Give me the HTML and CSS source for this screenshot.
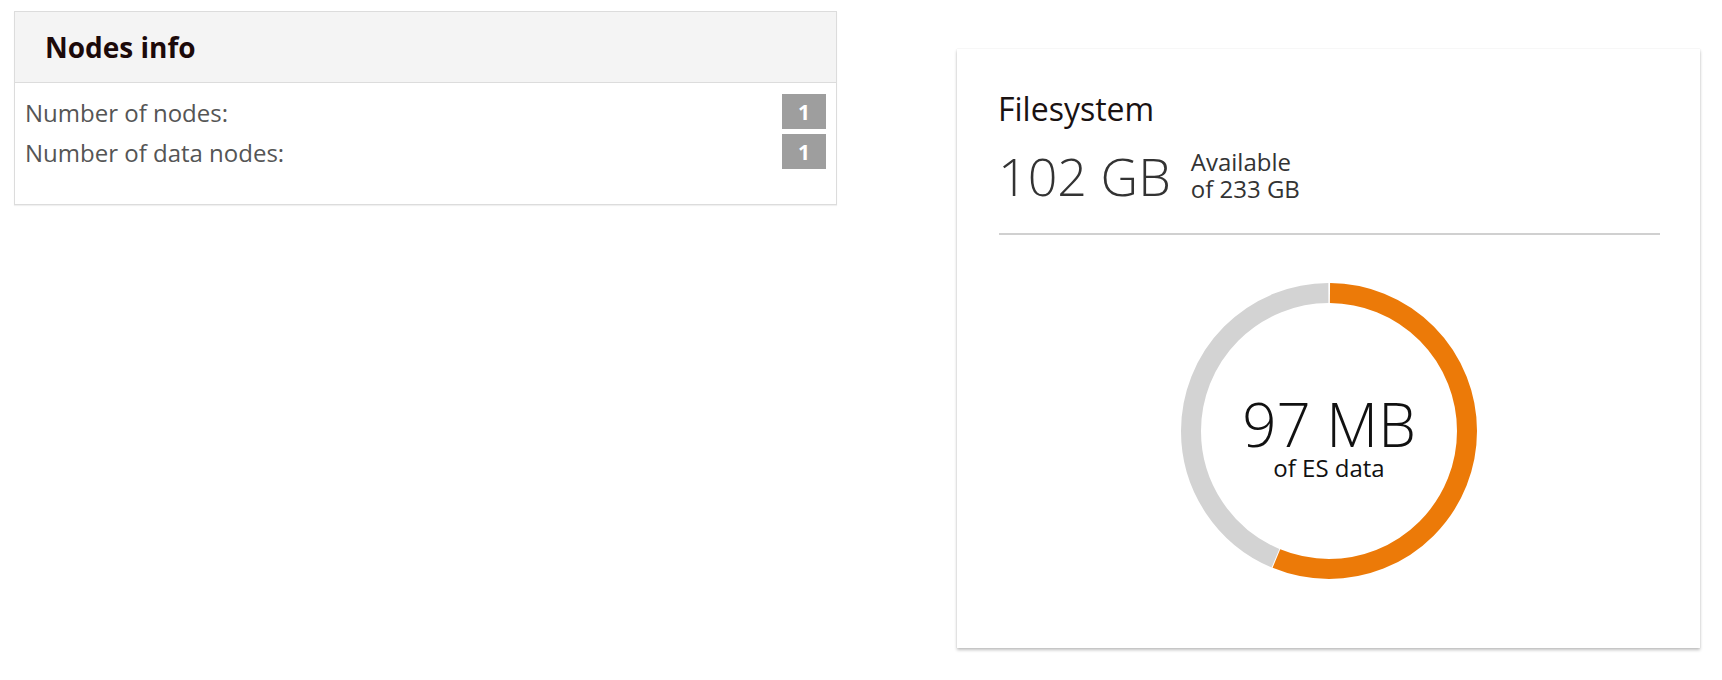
FILE: index.html
```html
<!DOCTYPE html>
<html lang="en">
<head>
<meta charset="utf-8">
<title>Cluster overview</title>
<link rel="stylesheet" href="styles.css">
</head>
<body>
<div class="page">
  <section class="nodes-panel">
    <header class="nodes-header"><h2>Nodes info</h2></header>
    <div class="nodes-body">
      <div class="nodes-row"><span class="label">Number of nodes:</span><span class="badge">1</span></div>
      <div class="nodes-row"><span class="label">Number of data nodes:</span><span class="badge">1</span></div>
    </div>
  </section>

  <section class="fs-card">
    <h3 class="fs-title">Filesystem</h3>
    <div class="fs-stats">
      <span class="fs-big">102 GB</span>
      <span class="fs-sub">Available<br>of 233 GB</span>
    </div>
    <div class="fs-sep"></div>
    <div class="donut">
      <svg class="donut-svg" width="300" height="300" viewBox="0 0 300 300">
        <circle cx="150" cy="150" r="138" fill="none" stroke="#d3d3d3" stroke-width="20"
          stroke-dasharray="377.8 1000" stroke-dashoffset="-488.3" transform="rotate(-90 150 150)"/>
        <circle cx="150" cy="150" r="138" fill="none" stroke="#ec7a08" stroke-width="20"
          stroke-dasharray="486.3 1000" stroke-dashoffset="-1" transform="rotate(-90 150 150)"/>
      </svg>
      <div class="donut-label">
        <span class="donut-big">97 MB</span>
        <span class="donut-small">of ES data</span>
      </div>
    </div>
  </section>
</div>
</body>
</html>
```

FILE: styles.css
```css
html, body {
  margin: 0;
  padding: 0;
  background: #ffffff;
}

body {
  font-family: "Open Sans", "Liberation Sans", sans-serif;
  color: #555;
  min-height: 680px;
}

.page {
  display: flex;
  align-items: flex-start;
  padding: 11px 0 0 14px;
}

/* Nodes info panel */
.nodes-panel {
  box-sizing: border-box;
  width: 823px;
  border: 1px solid #dcdcdc;
  box-shadow: 0 1px 1px rgba(0, 0, 0, 0.06);
  background: #fff;
}

.nodes-header {
  height: 70px;
  background: #f4f4f4;
  border-bottom: 1px solid #dcdcdc;
  display: flex;
  align-items: center;
  padding-left: 30px;
}

.nodes-header h2 {
  margin: 0;
  font-size: 28px;
  font-weight: 700;
  color: #1c0a0a;
  line-height: 40px;
}

.nodes-body {
  padding: 11px 10px 35px 10px;
  display: flex;
  flex-direction: column;
  gap: 5px;
}

.nodes-row {
  display: flex;
  justify-content: space-between;
  align-items: center;
  height: 35px;
}

.label {
  font-size: 24px;
  color: #555;
  line-height: 35px;
  padding-top: 2px;
}

.badge {
  width: 44px;
  height: 35px;
  background: #9e9e9e;
  color: #fff;
  font-weight: 700;
  font-size: 21px;
  display: flex;
  align-items: center;
  justify-content: center;
}

/* Filesystem card */
.fs-card {
  box-sizing: border-box;
  flex: none;
  width: 743px;
  height: 599px;
  margin: 38px 0 0 120px;
  padding: 40px 40px 0 41px;
  background: #fff;
  box-shadow: 0 2px 3px rgba(0, 0, 0, 0.25), 0 0 1px rgba(0, 0, 0, 0.12);
  display: flex;
  flex-direction: column;
}

.fs-title {
  margin: 0;
  font-size: 32px;
  font-weight: 400;
  line-height: 40px;
  color: #1a1212;
}

.fs-stats {
  display: flex;
  align-items: flex-end;
  gap: 20px;
  margin-top: 20px;
}

.fs-big {
  font-size: 52px;
  font-weight: 300;
  line-height: 52px;
  color: #333;
}

.fs-sub {
  font-size: 24px;
  line-height: 26.6px;
  color: #333;
}

.fs-sep {
  height: 2px;
  background: #d0d0d0;
  margin-top: 31px;
  margin-left: 1px;
}

.donut {
  position: relative;
  align-self: center;
  width: 300px;
  height: 300px;
  margin-top: 46px;
}

.donut-svg {
  display: block;
}

.donut-label {
  position: absolute;
  inset: 0;
  display: flex;
  flex-direction: column;
  align-items: center;
  justify-content: center;
  padding-top: 13px;
  box-sizing: border-box;
  color: #111;
}

.donut-big {
  font-size: 60px;
  font-weight: 300;
  line-height: 60px;
}

.donut-small {
  font-size: 24px;
  line-height: 28px;
}
```
